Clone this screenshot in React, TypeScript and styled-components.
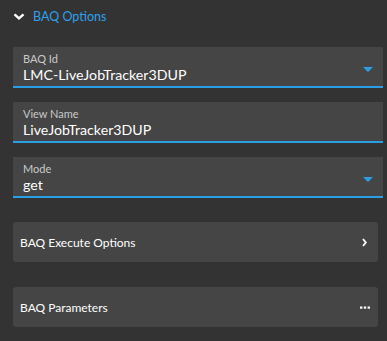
import React from "react";
import styled, { createGlobalStyle } from "styled-components";

const GlobalStyle = createGlobalStyle`
  html, body {
    margin: 0;
    padding: 0;
    background: #333333;
  }
  body {
    font-family: Lato, "Open Sans", sans-serif;
  }
`;

const Page = styled.div`
  width: 387px;
  height: 341px;
  box-sizing: border-box;
  padding: 8px 4px 0 13px;
  background: #333333;
`;

const Header = styled.div`
  display: flex;
  align-items: center;
  gap: 8px;
  height: 17px;
  line-height: 17px;
  color: #2ea0ec;
  font-size: 12.5px;
  margin-bottom: 22px;
`;

const Fields = styled.div`
  display: flex;
  flex-direction: column;
  gap: 14px;
`;

const Field = styled.div`
  position: relative;
  height: 41px;
  box-sizing: border-box;
  background: #454545;
  border-bottom: 2px solid #2b9fe6;
  padding: 6px 10px 0 10px;
  display: flex;
  flex-direction: column;
`;

const Label = styled.div`
  font-size: 11px;
  color: #c9c9c9;
  line-height: 12px;
`;

const Value = styled.div`
  font-size: 14.2px;
  color: #ffffff;
  line-height: 20px;
`;

const Caret = styled.span`
  position: absolute;
  right: 10px;
  top: 20px;
  width: 0;
  height: 0;
  border-left: 5px solid transparent;
  border-right: 5px solid transparent;
  border-top: 5px solid #2b9fe6;
`;

const Panels = styled.div`
  display: flex;
  flex-direction: column;
  gap: 25px;
  margin-top: 24px;
  width: 365px;
`;

const Panel = styled.div<{ $iconGap?: number }>`
  height: 40px;
  background: #454545;
  border-radius: 3px;
  display: flex;
  align-items: center;
  justify-content: space-between;
  padding: 0 ${(p) => 8 + (p.$iconGap ?? 0)}px 0 7px;
  color: #ffffff;
  font-size: 12px;
`;

const ChevronDown = () => (
  <svg width="12" height="7" viewBox="0 0 12 7">
    <path d="M1.5 1.3 L6 5.3 L10.5 1.3" fill="none" stroke="#fff" strokeWidth="2.4" />
  </svg>
);

const ChevronRight = () => (
  <svg width="5" height="9" viewBox="0 0 5 9">
    <path d="M1 1 L3.8 4.5 L1 8" fill="none" stroke="#fff" strokeWidth="1.8" />
  </svg>
);

const Dots = () => (
  <svg width="10" height="3" viewBox="0 0 10 3">
    <rect x="0" y="0.5" width="2.4" height="2.2" fill="#fff" />
    <rect x="3.8" y="0.5" width="2.4" height="2.2" fill="#fff" />
    <rect x="7.6" y="0.5" width="2.4" height="2.2" fill="#fff" />
  </svg>
);

const fields = [
  { label: "BAQ Id", value: "LMC-LiveJobTracker3DUP", select: true },
  { label: "View Name", value: "LiveJobTracker3DUP", select: false },
  { label: "Mode", value: "get", select: true },
];

export default function App() {
  return (
    <>
      <GlobalStyle />
      <Page>
        <Header>
          <ChevronDown />
          <span>BAQ Options</span>
        </Header>
        <Fields>
          {fields.map((f) => (
            <Field key={f.label}>
              <Label>{f.label}</Label>
              <Value>{f.value}</Value>
              {f.select && <Caret />}
            </Field>
          ))}
        </Fields>
        <Panels>
          <Panel $iconGap={3}>
            <span>BAQ Execute Options</span>
            <ChevronRight />
          </Panel>
          <Panel>
            <span>BAQ Parameters</span>
            <Dots />
          </Panel>
        </Panels>
      </Page>
    </>
  );
}
